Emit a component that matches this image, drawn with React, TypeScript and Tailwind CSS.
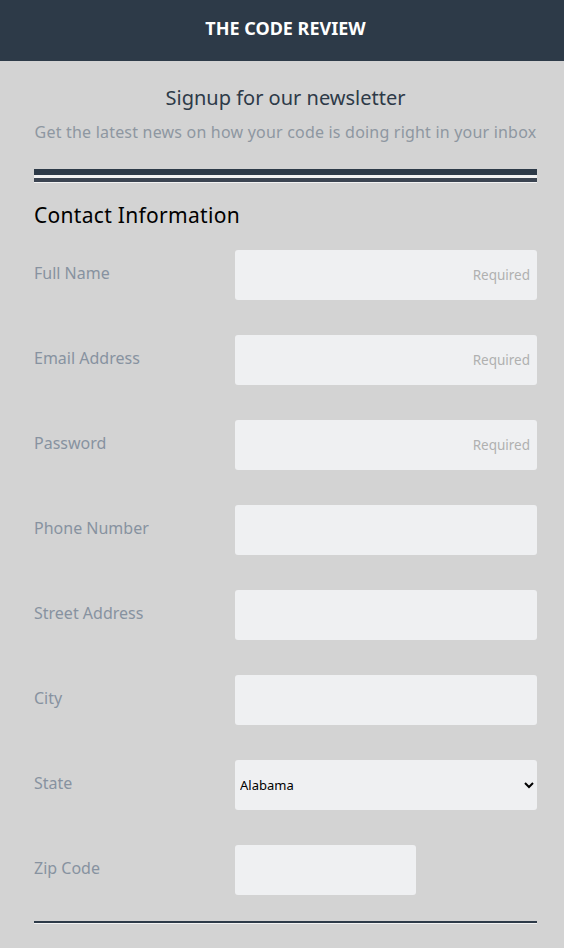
import React from "react";

const fields: { label: string; required?: boolean; type?: string }[] = [
  { label: "Full Name", required: true },
  { label: "Email Address", required: true },
  { label: "Password", required: true, type: "password" },
  { label: "Phone Number" },
  { label: "Street Address" },
  { label: "City" },
];

export default function App() {
  return (
    <div className="min-h-[948px] bg-[#d3d3d3] font-['Noto_Sans',sans-serif]">
      <header className="h-[61px] bg-[#2d3a48] flex items-center justify-center pl-[7px]">
        <h1 className="text-white font-bold text-[18px] -mt-[4px]">THE CODE REVIEW</h1>
      </header>
      <div className="pl-[34px] pr-[27px]">
        <div className="pt-[23px] text-center">
          <h2 className="text-[20px] leading-[28px] text-[#2d3a48]">Signup for our newsletter</h2>
          <p className="mt-[9px] text-[16px] leading-[22px] text-[#8e97a1] whitespace-nowrap tracking-[0.2px]">
            Get the latest news on how your code is doing right in your inbox
          </p>
        </div>
        <div className="mt-[26px]">
          <div className="h-[6px] bg-[#2d3a48]" />
          <div className="h-[3px] bg-[#f2f2f2]" />
          <div className="h-[4px] bg-[#3b4451]" />
          <div className="h-[1px] bg-[#f2f2f2]" />
        </div>
        <h3 className="mt-[18px] text-[21px] leading-[28px] text-black tracking-[0.3px]">Contact Information</h3>
        <form className="mt-[21px] flex flex-col gap-[35px]">
          {fields.map((f) => (
            <div key={f.label} className="flex items-center">
              <label className="w-[201px] text-[16px] text-[#8792a0] -mt-[4px]">{f.label}</label>
              <input
                type={f.type ?? "text"}
                placeholder={f.required ? "Required" : ""}
                className="flex-1 h-[50px] rounded-[3px] bg-[#eff0f2] px-[7px] text-right text-[13.5px] text-[#333] placeholder:text-[#b0b0b0] outline-none"
              />
            </div>
          ))}
          <div className="flex items-center">
            <label className="w-[201px] text-[16px] text-[#8792a0] -mt-[4px]">State</label>
            <select className="flex-1 h-[50px] rounded-[3px] bg-[#eff0f2] pl-[1px] pr-[6px] text-[13px] text-black outline-none font-['Noto_Sans',sans-serif]">
              <option>Alabama</option>
              <option>Alaska</option>
            </select>
          </div>
          <div className="flex items-center">
            <label className="w-[201px] text-[16px] text-[#8792a0] -mt-[4px]">Zip Code</label>
            <input
              type="text"
              className="w-[181px] h-[50px] rounded-[3px] bg-[#eff0f2] px-[7px] text-[13px] outline-none"
            />
          </div>
        </form>
        <div className="mt-[26px]">
          <div className="h-[2px] bg-[#2d3a48]" />
          <div className="h-[1px] bg-[#f2f2f2]" />
        </div>
      </div>
    </div>
  );
}
